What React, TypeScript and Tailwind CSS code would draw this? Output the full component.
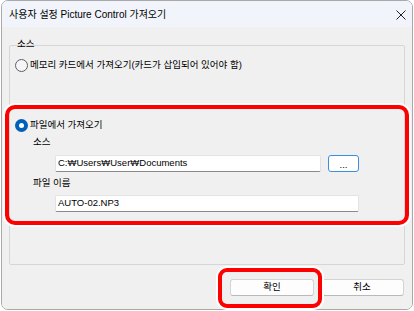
const font = { fontFamily: '"Liberation Sans", "Noto Sans CJK KR", sans-serif' };

const Radio = ({ checked }: { checked?: boolean }) =>
    checked ? (
        <span className="w-[13px] h-[13px] rounded-full bg-[#005fb8] flex items-center justify-center shrink-0">
            <span className="w-[5px] h-[5px] rounded-full bg-white" />
        </span>
    ) : (
        <span className="w-[13px] h-[13px] rounded-full border border-[#5f5f5f] bg-[#f6f6f6] shrink-0" />
    );

const Field = ({ value, width }: { value: string, width: string }) => (
    <div className={`${width} h-[17px] bg-white border border-[#e3e3e3] border-b-[#8a8a8a] rounded-[2px] flex items-center pl-[2px] text-[9.5px] text-black`}>
        {value}
    </div>
);

export default function App() {
    return (
        <div className="relative w-[414px] h-[311px] bg-white pl-px" style={font}>
            <div className="w-[412px] h-[310px] border border-[#a9a9a9] rounded-[7px] overflow-hidden flex flex-col">
                {/* title bar */}
                <div className="h-[26px] shrink-0 bg-[#f1f5fb] flex items-center justify-between pl-[7px] pr-[6px]">
                    <span className="text-[10px] text-black pt-[1px]">사용자 설정 Picture Control 가져오기</span>
                    <svg width="10" height="10" viewBox="0 0 10 10" className="mt-[1px]">
                        <path d="M0.5 0.5 L9.5 9.5 M9.5 0.5 L0.5 9.5" stroke="#222" strokeWidth="1" />
                    </svg>
                </div>

                {/* body */}
                <div className="flex-1 bg-[#f0f0f0] px-[7px] pt-[18px]">
                    <div className="h-[220px] border border-[#d6d6d6] rounded-[2px] flex flex-col text-[9.5px] text-black">
                        <div className="-mt-[8px] h-[12px] leading-[12px] pl-[7px]">소스</div>

                        <div className="mt-[8px] h-[14px] flex items-center gap-[2px] pl-[5px]">
                            <Radio />
                            <span>메모리 카드에서 가져오기(카드가 삽입되어 있어야 함)</span>
                        </div>

                        <div className="mt-[46px] h-[14px] flex items-center gap-[2px] pl-[5px]">
                            <Radio checked />
                            <span>파일에서 가져오기</span>
                        </div>

                        <div className="mt-[3px] h-[14px] flex items-center pl-[23px]">소스</div>
                        <div className="mt-[6px] flex items-center gap-[7px] pl-[45px]">
                            <Field value="C:₩Users₩User₩Documents" width="w-[266px]" />
                            <button className="w-[31px] h-[17px] bg-white border border-[#3d8ee0] rounded-[3px] flex items-center justify-center text-[9.5px] leading-none pt-[3px]">
                                ...
                            </button>
                        </div>

                        <div className="mt-[4px] h-[14px] flex items-center pl-[23px]">파일 이름</div>
                        <div className="mt-[5px] pl-[45px]">
                            <Field value="AUTO-02.NP3" width="w-[304px]" />
                        </div>
                    </div>

                    <div className="mt-[14px] flex justify-end gap-[6px] pr-px">
                        <button className="w-[84px] h-[17px] bg-[#fdfdfd] border border-[#d3d3d3] border-b-[#b9b9b9] rounded-[3px] text-[9.5px] text-black">확인</button>
                        <button className="w-[84px] h-[17px] bg-[#fdfdfd] border border-[#d3d3d3] border-b-[#b9b9b9] rounded-[3px] text-[9.5px] text-black">취소</button>
                    </div>
                </div>
            </div>

            {/* highlight marks */}
            <div className="absolute left-[5px] top-[105px] w-[404px] h-[120px] border-4 border-[#ff0000] rounded-[10px] shadow-[0_0_0_2px_#ffffff]" />
            <div className="absolute left-[218px] top-[268px] w-[104px] h-[40px] border-4 border-[#ff0000] rounded-[9px] shadow-[0_0_0_2px_#ffffff]" />
        </div>
    );
}
